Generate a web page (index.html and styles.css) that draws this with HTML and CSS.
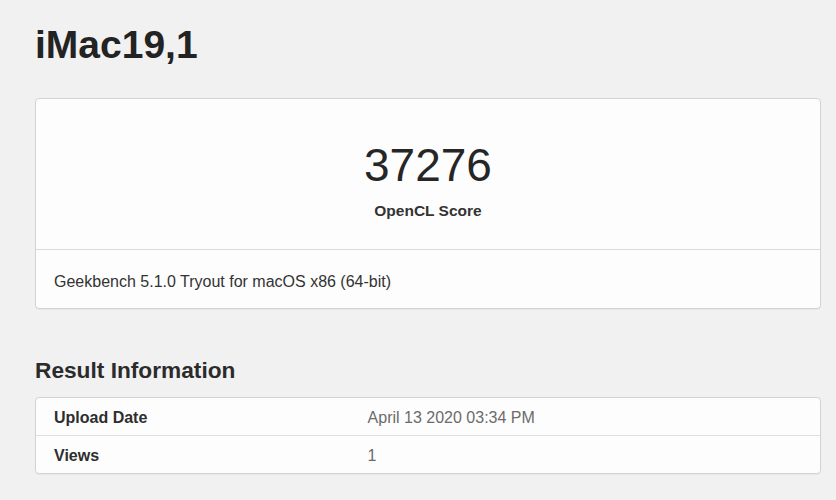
FILE: index.html
```html
<!DOCTYPE html>
<html lang="en">
<head>
<meta charset="utf-8">
<title>iMac19,1 - Geekbench</title>
<link rel="stylesheet" href="styles.css">
</head>
<body>
<main class="page">
  <h1 class="device-title">iMac19,1</h1>

  <section class="card score-card">
    <div class="score-body">
      <div class="score-value">37276</div>
      <div class="score-label">OpenCL Score</div>
    </div>
    <div class="score-footer">Geekbench 5.1.0 Tryout for macOS x86 (64-bit)</div>
  </section>

  <h2 class="section-title">Result Information</h2>

  <section class="card info-card">
    <div class="info-row">
      <div class="info-name">Upload Date</div>
      <div class="info-value">April 13 2020 03:34 PM</div>
    </div>
    <div class="info-row">
      <div class="info-name">Views</div>
      <div class="info-value">1</div>
    </div>
  </section>
</main>
</body>
</html>
```

FILE: styles.css
```css
html, body {
  margin: 0;
  padding: 0;
  background: #f1f1f1;
}

body {
  font-family: "Liberation Sans", Arial, Helvetica, sans-serif;
  color: #2b2b2b;
}

.page {
  padding: 22px 15px 40px 35px;
}

.device-title {
  margin: 0 0 30px 0;
  font-size: 39px;
  line-height: 46px;
  font-weight: bold;
  color: #232323;
}

.card {
  background: #fdfdfd;
  border: 1px solid #d3d3d3;
  border-radius: 4px;
  box-shadow: 0 1px 1px rgba(0, 0, 0, 0.04);
}

.score-body {
  padding: 39px 0 29px;
  text-align: center;
  border-bottom: 1px solid #dcdcdc;
}

.score-value {
  font-size: 46px;
  line-height: 55px;
  font-weight: normal;
  color: #262626;
}

.score-label {
  margin-top: 9px;
  font-size: 15.5px;
  line-height: 18px;
  font-weight: bold;
  color: #333;
}

.score-footer {
  padding: 22px 18px 17px;
  font-size: 16px;
  line-height: 19px;
  color: #333;
}

.section-title {
  margin: 48px 0 14px 0;
  font-size: 22.7px;
  line-height: 26px;
  font-weight: bold;
  color: #2b2b2b;
}

.info-row {
  display: grid;
  grid-template-columns: 40% 60%;
  border-bottom: 1px solid #dedede;
}

.info-row:last-child {
  border-bottom: none;
}

.info-name,
.info-value {
  padding: 11px 18px 8px;
  font-size: 16px;
  line-height: 18px;
}

.info-name {
  font-weight: bold;
  color: #2e2e2e;
}

.info-value {
  color: #6b6b6b;
}
```
